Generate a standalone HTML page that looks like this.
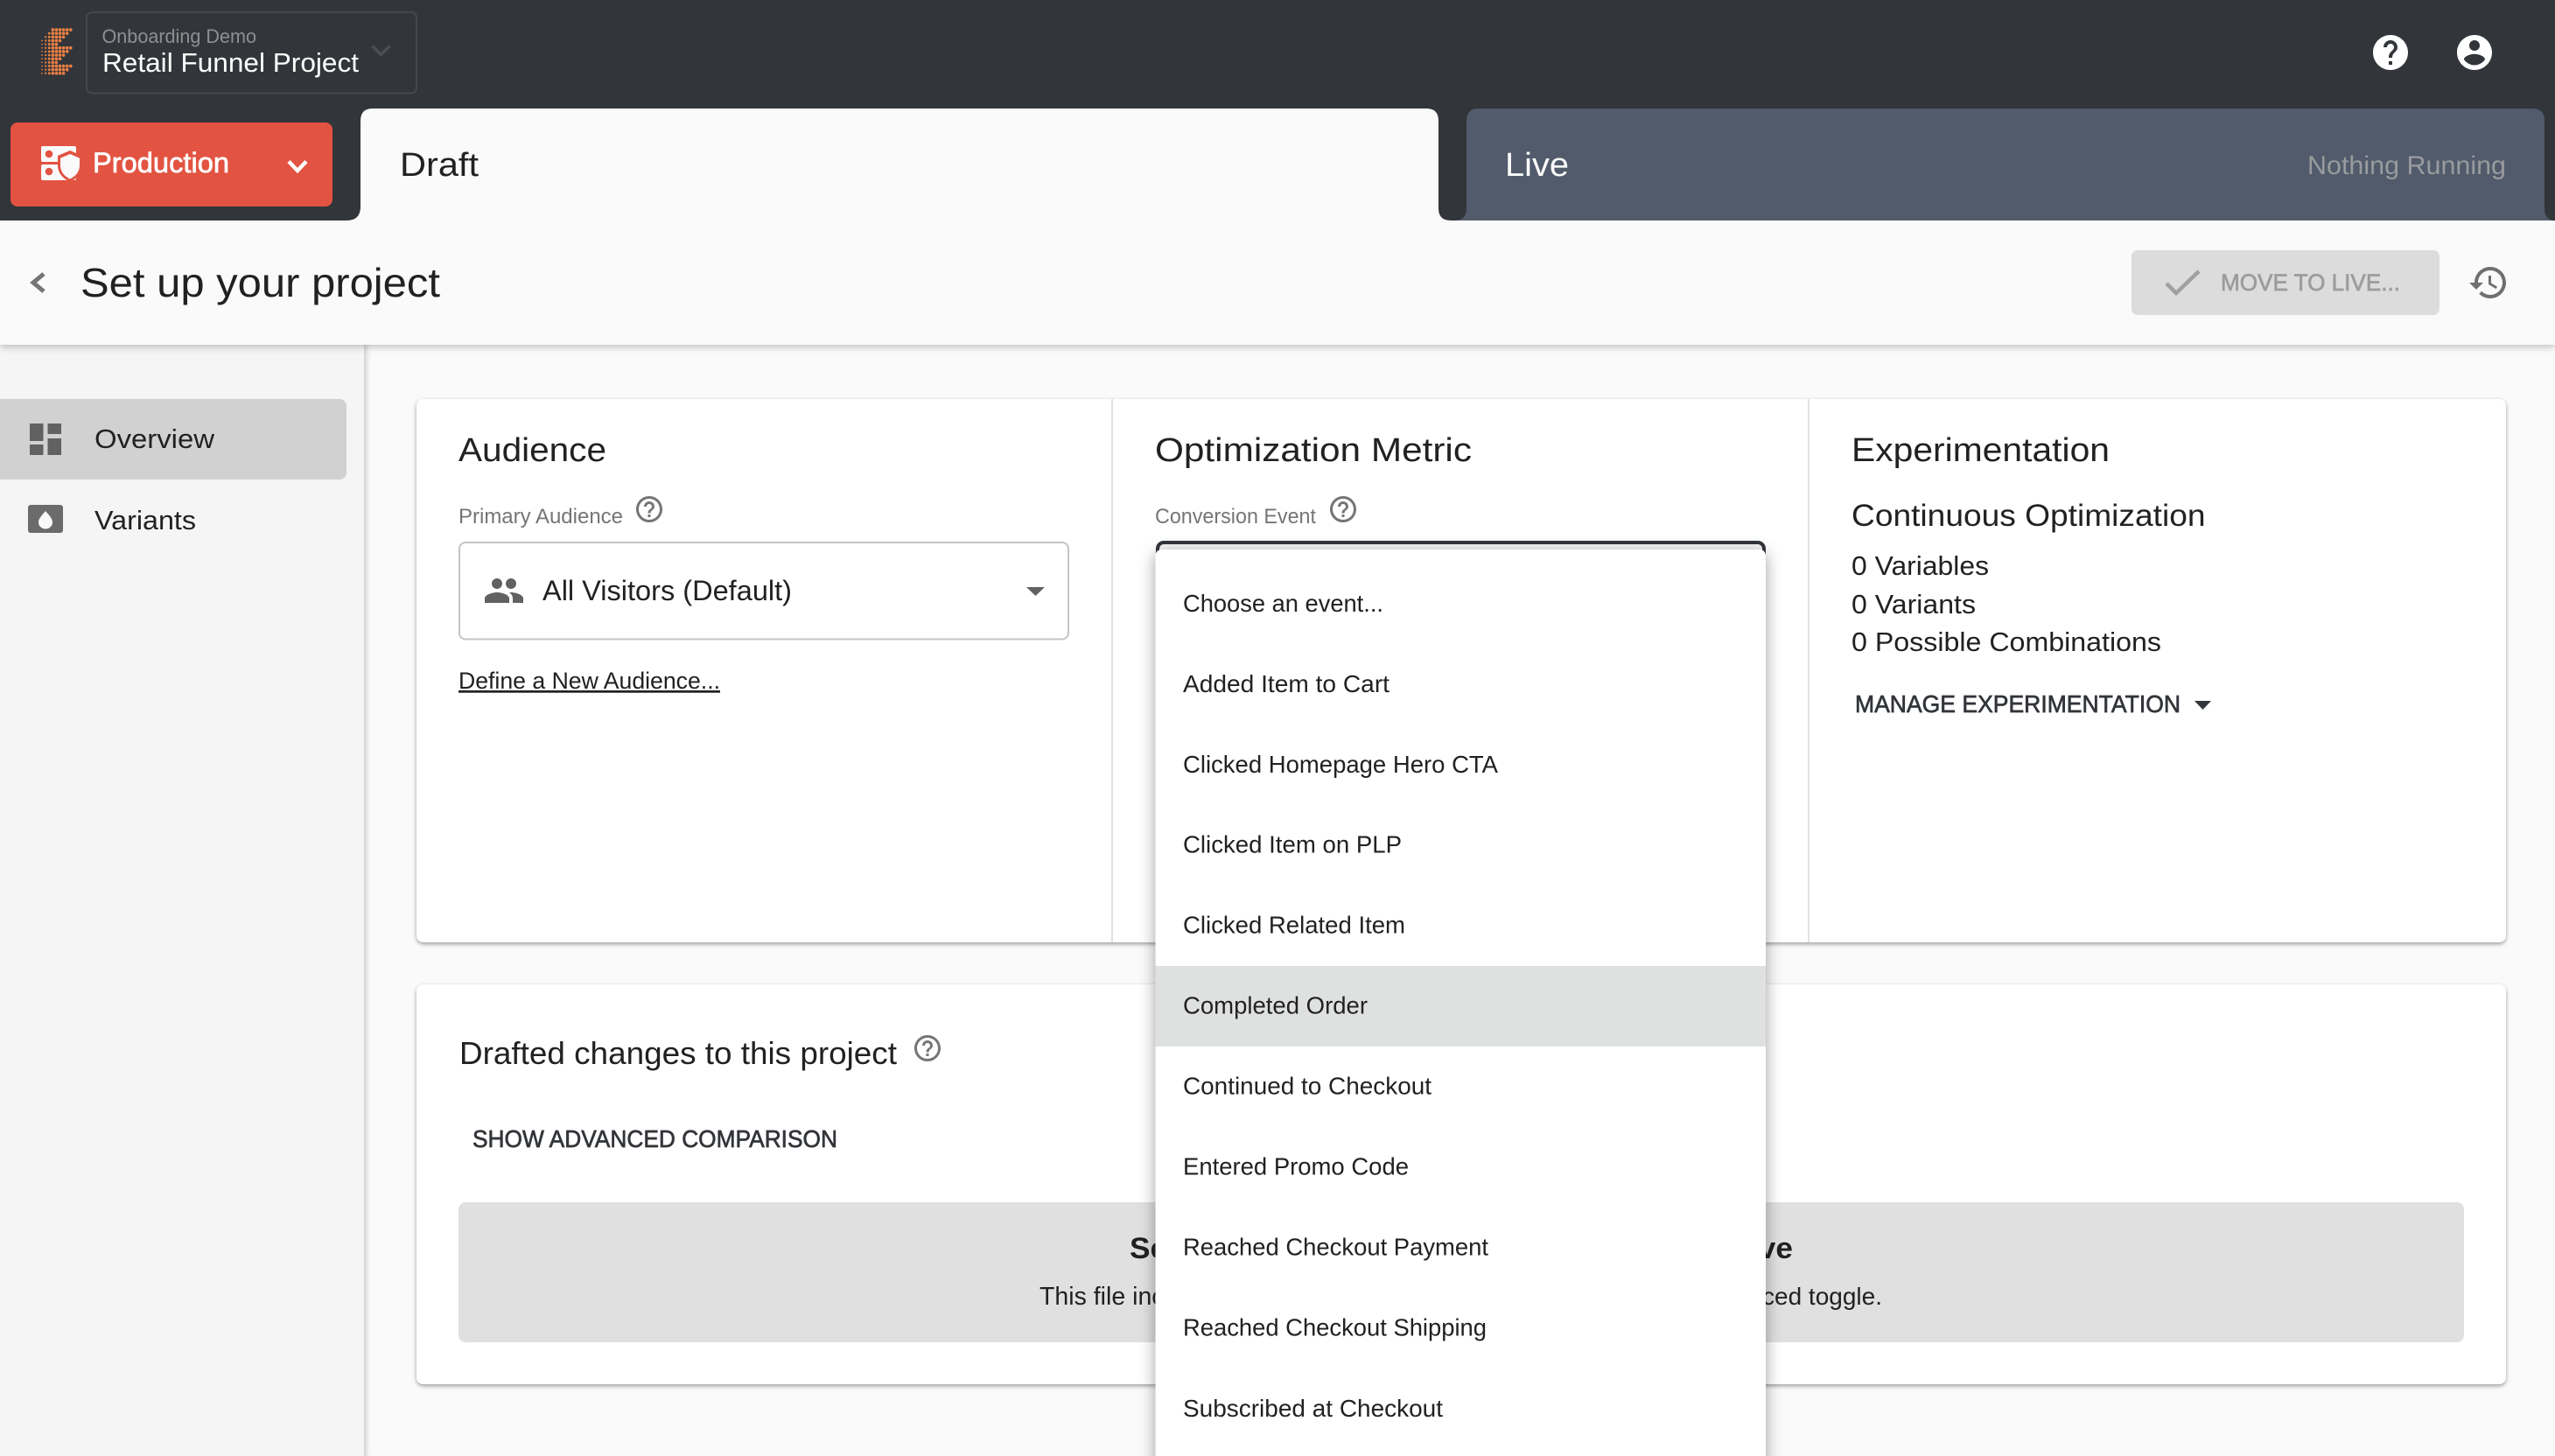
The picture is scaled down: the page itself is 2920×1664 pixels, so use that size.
<!DOCTYPE html>
<html lang="en">
<head>
<meta charset="utf-8">
<title>Set up your project</title>
<style>
html,body{margin:0;padding:0;width:2920px;height:1664px;overflow:hidden;background:#fafafa}
svg{display:block}
text{font-family:"Liberation Sans",sans-serif;fill:#212121}
.m{stroke-width:.7px}
</style>
</head>
<body>
<svg xmlns="http://www.w3.org/2000/svg" width="2920" height="1664" viewBox="0 0 2920 1664">
<defs>
<filter id="card" filterUnits="userSpaceOnUse" x="440" y="420" width="2460" height="1244"><feDropShadow dx="0" dy="2" stdDeviation="2.5" flood-color="#000" flood-opacity=".38"/></filter>
<filter id="bar" filterUnits="userSpaceOnUse" x="0" y="230" width="2920" height="210"><feDropShadow dx="0" dy="3" stdDeviation="4" flood-color="#000" flood-opacity=".22"/></filter>
<filter id="side" filterUnits="userSpaceOnUse" x="0" y="380" width="450" height="1290"><feDropShadow dx="2" dy="0" stdDeviation="3.5" flood-color="#000" flood-opacity=".22"/></filter>
<filter id="drop" filterUnits="userSpaceOnUse" x="1270" y="590" width="800" height="1074"><feDropShadow dx="0" dy="4" stdDeviation="9" flood-color="#000" flood-opacity=".38"/></filter>
</defs>

<!-- page -->
<rect width="2920" height="1664" fill="#fafafa"/>
<rect x="0" y="390" width="416" height="1280" fill="#f5f5f5" filter="url(#side)"/>

<!-- sidebar -->
<path d="M0 456H388a8 8 0 0 1 8 8v76a8 8 0 0 1-8 8H0z" fill="#d1d1d1"/>
<g fill="#616161">
<rect x="34" y="484" width="15.500" height="20"/><rect x="34" y="508" width="15.500" height="12"/>
<rect x="54.500" y="484" width="15.500" height="12"/><rect x="54.500" y="501" width="15.500" height="19"/>
</g>
<text x="108" y="512" font-size="31" textLength="137" lengthAdjust="spacingAndGlyphs">Overview</text>
<rect x="32" y="577" width="40" height="32" rx="3" fill="#6b6b6b"/>
<path d="M52 584c3 4 8 8 8 13a8 7.500 0 0 1-16 0c0-5 5-9 8-13z" fill="#fafafa"/>
<text x="108" y="605" font-size="31" textLength="116" lengthAdjust="spacingAndGlyphs">Variants</text>

<!-- header -->
<rect x="0" y="240" width="2920" height="154" fill="#fafafa" filter="url(#bar)"/>
<rect x="0" y="0" width="2920" height="252" fill="#323539"/>
<!-- tabs -->
<path d="M396 252q16 0 16-16V138q0-14 14-14H1630q14 0 14 14V238q0 14 14 14z" fill="#fafafa"/>
<path d="M1662 252q14 0 14-14V138q0-14 14-14H2894q14 0 14 14V238q0 14 12 14z" fill="#515b6b"/>
<text x="457" y="201" font-size="38" textLength="90" lengthAdjust="spacingAndGlyphs">Draft</text>
<text x="1720" y="201" font-size="38" textLength="73" lengthAdjust="spacingAndGlyphs" style="fill:#fafafa">Live</text>
<text x="2637" y="199" font-size="30" textLength="227" lengthAdjust="spacingAndGlyphs" style="fill:#999b9e">Nothing Running</text>

<!-- logo -->
<g fill="none" stroke="#e97f44" stroke-linecap="round">
<g stroke-width="3.700" stroke-dasharray="0 4.100">
<path d="M60.300 34H81"/><path d="M60.300 38.150H77"/><path d="M60.300 42.300H73"/><path d="M60.300 46.450H69"/><path d="M60.300 50.600H65"/>
<path d="M60.300 54.750H81"/><path d="M60.300 58.900H77"/><path d="M60.300 63.050H73"/><path d="M60.300 67.200H69"/><path d="M60.300 71.350H65"/>
<path d="M60.300 75.500H81"/><path d="M60.300 79.650H77"/><path d="M60.300 83.800H73"/>
</g>
<path d="M56.200 38.150V86" stroke-width="2.900" stroke-dasharray="0 4.150"/>
<path d="M52.100 42.300V86" stroke-width="2.300" stroke-dasharray="0 4.150"/>
<path d="M48 46.450V86" stroke-width="1.800" stroke-dasharray="0 4.150"/>
</g>

<!-- project selector -->
<rect x="99" y="14" width="377" height="92.500" rx="6" fill="none" stroke="#44474b" stroke-width="2"/>
<text x="116.500" y="49" font-size="22" textLength="176.500" lengthAdjust="spacingAndGlyphs" style="fill:#8d9093">Onboarding Demo</text>
<text x="117" y="82" font-size="31" textLength="293" lengthAdjust="spacingAndGlyphs" style="fill:#fff">Retail Funnel Project</text>
<path d="M425.500 52.500L435.500 62.500L445.500 52.500" fill="none" stroke="#4a4d51" stroke-width="3.500"/>

<!-- top-right icons -->
<path transform="translate(2708 36) scale(2)" fill="#fff" d="M12 2C6.480 2 2 6.480 2 12s4.480 10 10 10 10-4.480 10-10S17.520 2 12 2zm1 17h-2v-2h2v2zm2.070-7.750l-.9.920C13.450 12.900 13 13.500 13 15h-2v-.5c0-1.100.45-2.100 1.170-2.830l1.240-1.260c.37-.36.59-.86.59-1.410 0-1.100-.9-2-2-2s-2 .9-2 2H8c0-2.210 1.790-4 4-4s4 1.790 4 4c0 .88-.36 1.680-.93 2.250z"/>
<path transform="translate(2804 36) scale(2)" fill="#fff" d="M12 2C6.480 2 2 6.480 2 12s4.480 10 10 10 10-4.480 10-10S17.520 2 12 2zm0 3c1.660 0 3 1.340 3 3s-1.340 3-3 3-3-1.340-3-3 1.340-3 3-3zm0 14.200c-2.500 0-4.710-1.280-6-3.220.03-1.990 4-3.080 6-3.080 1.990 0 5.970 1.090 6 3.080-1.290 1.940-3.500 3.220-6 3.220z"/>

<!-- production button -->
<rect x="12" y="140" width="368" height="96" rx="8" fill="#e25341"/>
<rect x="47" y="167" width="40" height="18" rx="2" fill="#fafafa"/>
<rect x="47" y="188" width="40" height="18" rx="2" fill="#fafafa"/>
<circle cx="56" cy="176" r="4.300" fill="#e25341"/><circle cx="56" cy="196" r="4.300" fill="#e25341"/>
<path d="M80 172l14 6v11c0 9-6 15-14 19-8-4-14-10-14-19v-11z" fill="#e25341"/>
<path d="M80 176l11 4.700v8.300c0 7.500-4.800 12.500-11 15.500-6.200-3-11-8-11-15.500v-8.300z" fill="#fafafa"/>
<text class="m" x="106" y="197" font-size="32" textLength="156" lengthAdjust="spacingAndGlyphs" style="fill:#fff;stroke:#fff">Production</text>
<path d="M330 184.500L340 195L350 184.500" fill="none" stroke="#fff" stroke-width="4.500"/>

<!-- title bar -->
<path d="M50 313L38 323L50 333" fill="none" stroke="#757575" stroke-width="5"/>
<text x="92" y="339" font-size="46" textLength="411" lengthAdjust="spacingAndGlyphs">Set up your project</text>
<rect x="2436" y="286" width="352" height="74" rx="7" fill="#dcdcdc"/>
<path d="M2476 324L2487 335L2513 310" fill="none" stroke="#a0a0a0" stroke-width="4.500"/>
<text class="m" x="2538" y="332" font-size="27" textLength="205" lengthAdjust="spacingAndGlyphs" style="fill:#9c9c9c;stroke:#9c9c9c">MOVE TO LIVE...</text>
<path transform="translate(2820 299) scale(2)" fill="#6f6f6f" d="M13 3c-4.970 0-9 4.030-9 9H1l3.890 3.890.07.14L9 12H6c0-3.870 3.130-7 7-7s7 3.130 7 7-3.130 7-7 7c-1.930 0-3.680-.79-4.940-2.060l-1.420 1.420C8.270 19.990 10.510 21 13 21c4.970 0 9-4.030 9-9s-4.030-9-9-9zm-1 5v5l4.280 2.540.72-1.210-3.500-2.080V8H12z"/>

<!-- top card -->
<rect x="476" y="456" width="2388" height="621" rx="8" fill="#fff" filter="url(#card)"/>
<rect x="1270" y="456" width="2" height="621" fill="#e2e2e2"/>
<rect x="2066" y="456" width="2" height="621" fill="#e2e2e2"/>

<text x="524" y="527" font-size="38" textLength="169" lengthAdjust="spacingAndGlyphs">Audience</text>
<text x="524" y="598" font-size="24" textLength="188" lengthAdjust="spacingAndGlyphs" style="fill:#757575">Primary Audience</text>
<path transform="translate(724 564) scale(1.500)" fill="#757575" d="M11 18h2v-2h-2v2zm1-16C6.480 2 2 6.480 2 12s4.480 10 10 10 10-4.480 10-10S17.520 2 12 2zm0 18c-4.410 0-8-3.590-8-8s3.590-8 8-8 8 3.590 8 8-3.590 8-8 8zm0-14c-2.210 0-4 1.790-4 4h2c0-1.100.9-2 2-2s2 .9 2 2c0 2-3 1.750-3 5h2c0-2.250 3-2.500 3-5 0-2.210-1.790-4-4-4z"/>
<rect x="525" y="620" width="696" height="110.500" rx="7" fill="#fff" stroke="#c4c4c4" stroke-width="2"/>
<path transform="translate(552 651) scale(2)" fill="#616161" d="M16 11c1.660 0 2.990-1.340 2.990-3S17.660 5 16 5c-1.660 0-3 1.340-3 3s1.340 3 3 3zm-8 0c1.660 0 2.990-1.340 2.990-3S9.660 5 8 5C6.340 5 5 6.340 5 8s1.340 3 3 3zm0 2c-2.330 0-7 1.170-7 3.500V19h14v-2.500c0-2.330-4.670-3.500-7-3.500zm8 0c-.29 0-.62.02-.97.05 1.160.84 1.970 1.970 1.970 3.450V19h6v-2.500c0-2.330-4.670-3.500-7-3.500z"/>
<text x="620" y="686" font-size="32" textLength="285" lengthAdjust="spacingAndGlyphs">All Visitors (Default)</text>
<path d="M1173 671h21l-10.500 10z" fill="#616161"/>
<text x="524" y="787" font-size="27" textLength="299" lengthAdjust="spacingAndGlyphs" text-decoration="underline">Define a New Audience...</text>

<text x="1320" y="527" font-size="38" textLength="362" lengthAdjust="spacingAndGlyphs">Optimization Metric</text>
<text x="1320" y="598" font-size="24" textLength="184" lengthAdjust="spacingAndGlyphs" style="fill:#757575">Conversion Event</text>
<path transform="translate(1517 564) scale(1.500)" fill="#757575" d="M11 18h2v-2h-2v2zm1-16C6.480 2 2 6.480 2 12s4.480 10 10 10 10-4.480 10-10S17.520 2 12 2zm0 18c-4.410 0-8-3.590-8-8s3.590-8 8-8 8 3.590 8 8-3.590 8-8 8zm0-14c-2.210 0-4 1.790-4 4h2c0-1.100.9-2 2-2s2 .9 2 2c0 2-3 1.750-3 5h2c0-2.250 3-2.500 3-5 0-2.210-1.790-4-4-4z"/>

<text x="2116" y="527" font-size="38" textLength="295" lengthAdjust="spacingAndGlyphs">Experimentation</text>
<text x="2116" y="601" font-size="35" textLength="404.500" lengthAdjust="spacingAndGlyphs">Continuous Optimization</text>
<text x="2116" y="657" font-size="31" textLength="157" lengthAdjust="spacingAndGlyphs">0 Variables</text>
<text x="2116" y="701" font-size="31" textLength="142" lengthAdjust="spacingAndGlyphs">0 Variants</text>
<text x="2116" y="744" font-size="31" textLength="354" lengthAdjust="spacingAndGlyphs">0 Possible Combinations</text>
<text class="m" x="2120" y="814" font-size="28" textLength="372" lengthAdjust="spacingAndGlyphs" style="fill:#323539;stroke:#323539">MANAGE EXPERIMENTATION</text>
<path d="M2508 801h19l-9.500 10z" fill="#323539"/>

<!-- bottom card -->
<rect x="476" y="1125" width="2388" height="457" rx="8" fill="#fff" filter="url(#card)"/>
<text x="525" y="1216" font-size="36" textLength="500" lengthAdjust="spacingAndGlyphs">Drafted changes to this project</text>
<path transform="translate(1042 1180) scale(1.500)" fill="#757575" d="M11 18h2v-2h-2v2zm1-16C6.480 2 2 6.480 2 12s4.480 10 10 10 10-4.480 10-10S17.520 2 12 2zm0 18c-4.410 0-8-3.590-8-8s3.590-8 8-8 8 3.590 8 8-3.590 8-8 8zm0-14c-2.210 0-4 1.790-4 4h2c0-1.100.9-2 2-2s2 .9 2 2c0 2-3 1.750-3 5h2c0-2.250 3-2.500 3-5 0-2.210-1.790-4-4-4z"/>
<text class="m" x="540" y="1311" font-size="28" textLength="417" lengthAdjust="spacingAndGlyphs" style="fill:#323539;stroke:#323539">SHOW ADVANCED COMPARISON</text>
<rect x="524" y="1374" width="2292" height="160" rx="8" fill="#e0e0e0"/>
<text x="1291" y="1438" font-size="34" font-weight="700" textLength="758" lengthAdjust="spacingAndGlyphs">Select an Optimization Metric to Move to Live</text>
<text x="1188" y="1491" font-size="28.500">This file includes changes</text>
<text x="2151" y="1491" font-size="28" text-anchor="end">behind the advanced toggle.</text>

<!-- select outline + dropdown -->
<rect x="1323" y="620" width="693" height="80" rx="7" fill="#f6f6f6" stroke="#323539" stroke-width="4"/>
<path d="M1320.500 636q0-8 8-8H2010q8 0 8 8V1680H1320.500z" fill="#fff" filter="url(#drop)"/>
<rect x="1320.500" y="1104" width="697.500" height="92" fill="#dfe1e0"/>
<g font-size="28">
<text x="1352" y="699" textLength="229" lengthAdjust="spacingAndGlyphs">Choose an event...</text>
<text x="1352" y="791" textLength="236" lengthAdjust="spacingAndGlyphs">Added Item to Cart</text>
<text x="1352" y="883" textLength="360" lengthAdjust="spacingAndGlyphs">Clicked Homepage Hero CTA</text>
<text x="1352" y="974.500" textLength="250" lengthAdjust="spacingAndGlyphs">Clicked Item on PLP</text>
<text x="1352" y="1066.500" textLength="254" lengthAdjust="spacingAndGlyphs">Clicked Related Item</text>
<text x="1352" y="1158.500" textLength="211" lengthAdjust="spacingAndGlyphs">Completed Order</text>
<text x="1352" y="1250.500" textLength="284" lengthAdjust="spacingAndGlyphs">Continued to Checkout</text>
<text x="1352" y="1342.700" textLength="258" lengthAdjust="spacingAndGlyphs">Entered Promo Code</text>
<text x="1352" y="1434.500" textLength="349" lengthAdjust="spacingAndGlyphs">Reached Checkout Payment</text>
<text x="1352" y="1526.500" textLength="347" lengthAdjust="spacingAndGlyphs">Reached Checkout Shipping</text>
<text x="1352" y="1619" textLength="297" lengthAdjust="spacingAndGlyphs">Subscribed at Checkout</text>
</g>
</svg>
</body>
</html>
